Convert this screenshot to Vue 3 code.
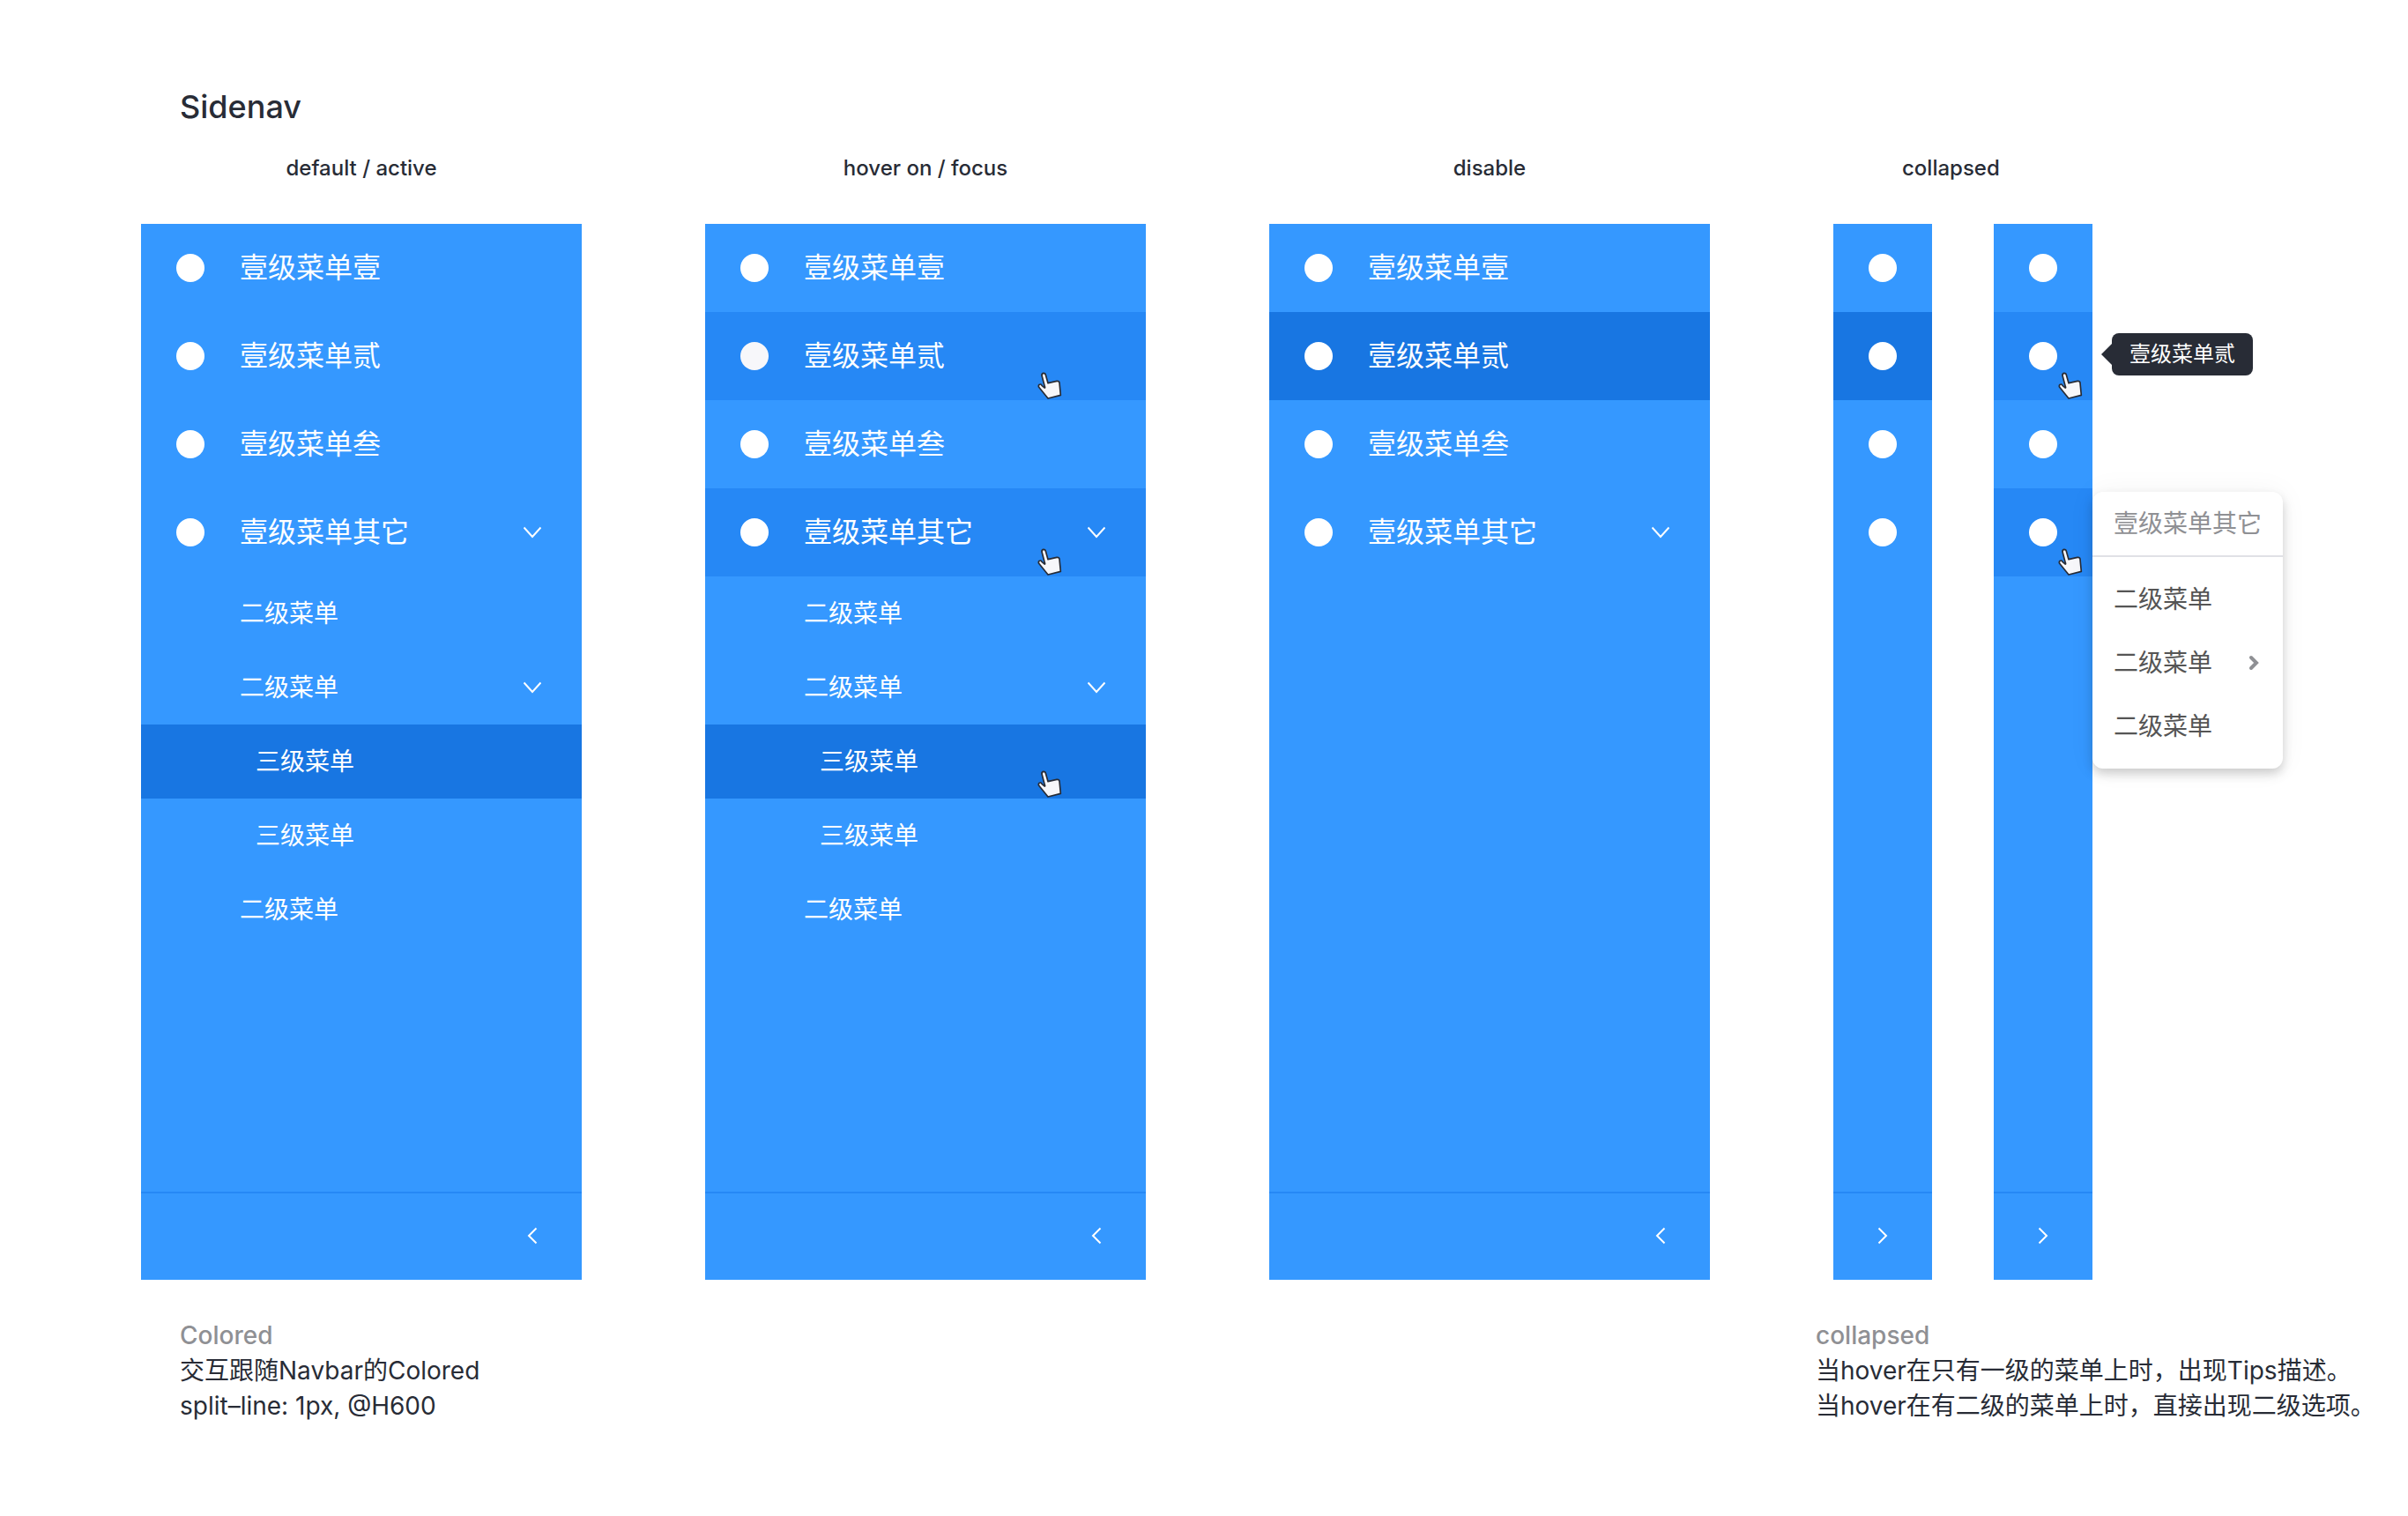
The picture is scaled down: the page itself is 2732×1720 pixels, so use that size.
<script setup>
const first = (label, extra = {}) => ({ label, level: 1, ...extra })
const second = (extra = {}) => ({ label: '二级菜单', level: 2, ...extra })
const third = (extra = {}) => ({ label: '三级菜单', level: 3, ...extra })

const panels = [
  {
    title: 'default / active',
    items: [
      first('壹级菜单壹'),
      first('壹级菜单贰'),
      first('壹级菜单叁'),
      first('壹级菜单其它', { open: true }),
      second(),
      second({ open: true }),
      third({ state: 'active' }),
      third(),
      second(),
    ],
  },
  {
    title: 'hover on / focus',
    items: [
      first('壹级菜单壹'),
      first('壹级菜单贰', { state: 'hover', pointer: true, muted: true }),
      first('壹级菜单叁'),
      first('壹级菜单其它', { open: true, state: 'hover', pointer: true }),
      second(),
      second({ open: true }),
      third({ state: 'active', pointer: true }),
      third(),
      second(),
    ],
  },
  {
    title: 'disable',
    items: [
      first('壹级菜单壹'),
      first('壹级菜单贰', { state: 'active' }),
      first('壹级菜单叁'),
      first('壹级菜单其它', { open: true }),
    ],
  },
]

const rails = [
  [
    { label: '壹级菜单壹' },
    { label: '壹级菜单贰', state: 'active' },
    { label: '壹级菜单叁' },
    { label: '壹级菜单其它' },
  ],
  [
    { label: '壹级菜单壹' },
    { label: '壹级菜单贰', state: 'hover', pointer: true, tip: true },
    { label: '壹级菜单叁' },
    { label: '壹级菜单其它', state: 'hover', pointer: true, submenu: true },
  ],
]

const handPath =
  'M15 12Q14 5 21 4Q27 4 28 10L36 38L66 31Q74 30 75 37L79 79L36 90L5 52Q2 46 7 43Q11 40 15 46L24 54Q27 55 25 50Z'
</script>

<template>
  <main class="page" lang="zh-CN">
    <h1 class="title">Sidenav</h1>

    <div class="board">
      <section v-for="panel in panels" :key="panel.title">
        <h2 class="label">{{ panel.title }}</h2>
        <nav class="sidenav" :aria-label="panel.title">
          <ul class="menu">
            <li v-for="(item, i) in panel.items" :key="i">
              <a href="#" class="item" :class="['level-' + item.level, item.state]">
                <span v-if="item.level === 1" class="dot" :class="{ muted: item.muted }"></span>
                <span class="text">{{ item.label }}</span>
                <svg v-if="item.open" class="chevron" viewBox="0 0 20 20">
                  <path d="M0.5 4.5L10 15L19.5 4.5" />
                </svg>
              </a>
              <svg v-if="item.pointer" class="pointer" viewBox="0 0 84 96"><path :d="handPath" /></svg>
            </li>
          </ul>
          <button type="button" class="toggle" aria-label="collapse">
            <svg class="chevron" viewBox="0 0 20 20"><path d="M14.5 1.5L6 10L14.5 18.5" /></svg>
          </button>
        </nav>
      </section>

      <section>
        <h2 class="label label-rails">collapsed</h2>
        <div class="rails">
          <nav v-for="(rail, r) in rails" :key="r" class="sidenav rail" aria-label="collapsed">
            <ul class="menu">
              <li v-for="item in rail" :key="item.label">
                <a href="#" class="item level-1" :class="item.state" :aria-label="item.label">
                  <span class="dot"></span>
                </a>
                <svg v-if="item.pointer" class="pointer" viewBox="0 0 84 96"><path :d="handPath" /></svg>
                <div v-if="item.tip" class="tip" role="tooltip">{{ item.label }}</div>
                <div v-if="item.submenu" class="dropdown">
                  <p class="dropdown-title">{{ item.label }}</p>
                  <ul class="dropdown-list">
                    <li v-for="n in 3" :key="n">
                      <a href="#" class="dropdown-item">
                        二级菜单
                        <svg v-if="n === 2" class="more" viewBox="0 0 12 18">
                          <path d="M3 3L9 9L3 15" />
                        </svg>
                      </a>
                    </li>
                  </ul>
                </div>
              </li>
            </ul>
            <button type="button" class="toggle" aria-label="expand">
              <svg class="chevron" viewBox="0 0 20 20"><path d="M5.5 1.5L14 10L5.5 18.5" /></svg>
            </button>
          </nav>
        </div>
      </section>
    </div>

    <div class="notes">
      <section>
        <h3>Colored</h3>
        <p>交互跟随Navbar的Colored</p>
        <p>split–line: 1px, @H600</p>
      </section>
      <section>
        <h3>collapsed</h3>
        <p>当hover在只有一级的菜单上时，出现Tips描述。</p>
        <p>当hover在有二级的菜单上时，直接出现二级选项。</p>
      </section>
    </div>
  </main>
</template>

<style>
body {
  margin: 0;
  background: #fff;
}
</style>

<style scoped>
.page {
  --base: #3598ff;
  --hover: #2688f5;
  --active: #1876e2;
  --ink: #282c36;
  padding: 96px 0;
  color: var(--ink);
  font-family: Inter, 'Noto Sans CJK SC', sans-serif;
  font-size: 28px;
}

h1, h2, h3, p, ul {
  margin: 0;
  padding: 0;
}

ul {
  list-style: none;
}

a {
  color: inherit;
  text-decoration: none;
}

svg {
  fill: none;
  stroke: currentColor;
}

.title {
  padding-left: 204px;
  font-size: 36px;
  font-weight: 500;
  line-height: 50px;
}

.board {
  display: grid;
  grid-template-columns: repeat(3, minmax(0, 500fr)) minmax(0, 652fr);
  column-gap: 140px;
  padding: 28px 0 0 160px;
}

.label {
  margin-bottom: 46px;
  font-size: 24px;
  font-weight: 500;
  line-height: 34px;
  text-align: center;
}

.label-rails {
  padding-left: 78px;
  text-align: left;
}

.sidenav {
  display: flex;
  flex-direction: column;
  min-height: 1198px;
  background: var(--base);
  color: #fff;
}

.menu {
  flex: 1;
}

.menu > li {
  position: relative;
}

.item {
  display: flex;
  align-items: center;
  height: 84px;
  padding: 0 46px 0 112px;
  line-height: 40px;
}

.level-1 {
  height: 100px;
  padding-left: 40px;
  font-size: 32px;
}

.level-3 {
  padding-left: 130px;
}

.hover {
  background: var(--hover);
}

.active {
  background: var(--active);
}

.dot {
  flex: none;
  width: 32px;
  height: 32px;
  margin-right: 40px;
  border-radius: 50%;
  background: #fff;
}

.muted {
  background: #f7f7fa;
}

.text {
  flex: 1;
}

.chevron {
  flex: none;
  width: 20px;
  height: 20px;
  stroke-width: 2;
}

.toggle {
  display: flex;
  align-items: center;
  justify-content: flex-end;
  height: 100px;
  padding: 0 46px 2px;
  border: 0;
  border-top: 2px solid var(--hover);
  background: none;
  color: inherit;
}

.pointer {
  position: absolute;
  right: 95px;
  bottom: 0;
  width: 28px;
  height: 32px;
  fill: #f7f7fa;
  stroke: var(--ink);
  stroke-width: 5;
  stroke-linejoin: round;
}

.rails {
  display: flex;
  gap: 70px;
}

.rail {
  width: 112px;
}

.rail .item {
  padding: 0 40px;
}

.rail .dot {
  margin: 0;
}

.rail .toggle {
  justify-content: center;
}

.rail .pointer {
  right: 11px;
}

.tip {
  position: absolute;
  top: 24px;
  left: 134px;
  padding: 0 20px;
  border-radius: 8px;
  background: var(--ink);
  font-size: 24px;
  line-height: 48px;
  white-space: nowrap;
}

.tip::before {
  content: '';
  position: absolute;
  top: 12px;
  left: -12px;
  border: solid transparent;
  border-width: 12px 12px 12px 0;
  border-right-color: var(--ink);
}

.dropdown {
  position: absolute;
  top: 4px;
  left: 112px;
  width: 216px;
  border-radius: 12px;
  background: #fff;
  box-shadow: 0 6px 12px rgba(0, 0, 0, 0.18), 0 0 32px rgba(0, 0, 0, 0.05);
  color: #555;
}

.dropdown-title {
  padding: 0 24px;
  border-bottom: 2px solid #e0e1e6;
  color: #8f9094;
  line-height: 72px;
  white-space: nowrap;
}

.dropdown-list {
  padding: 12px 0;
}

.dropdown-item {
  display: flex;
  align-items: center;
  justify-content: space-between;
  padding: 0 27px 0 24px;
  line-height: 72px;
}

.more {
  width: 12px;
  height: 18px;
  stroke: #8f9094;
  stroke-width: 4;
  stroke-linecap: round;
}

.notes {
  display: grid;
  grid-template-columns: minmax(0, 1856fr) minmax(0, 672fr);
  padding: 43px 0 0 204px;
  line-height: 40px;
}

.notes h3 {
  color: #8f9094;
  font-size: 28px;
  font-weight: 500;
}
</style>
